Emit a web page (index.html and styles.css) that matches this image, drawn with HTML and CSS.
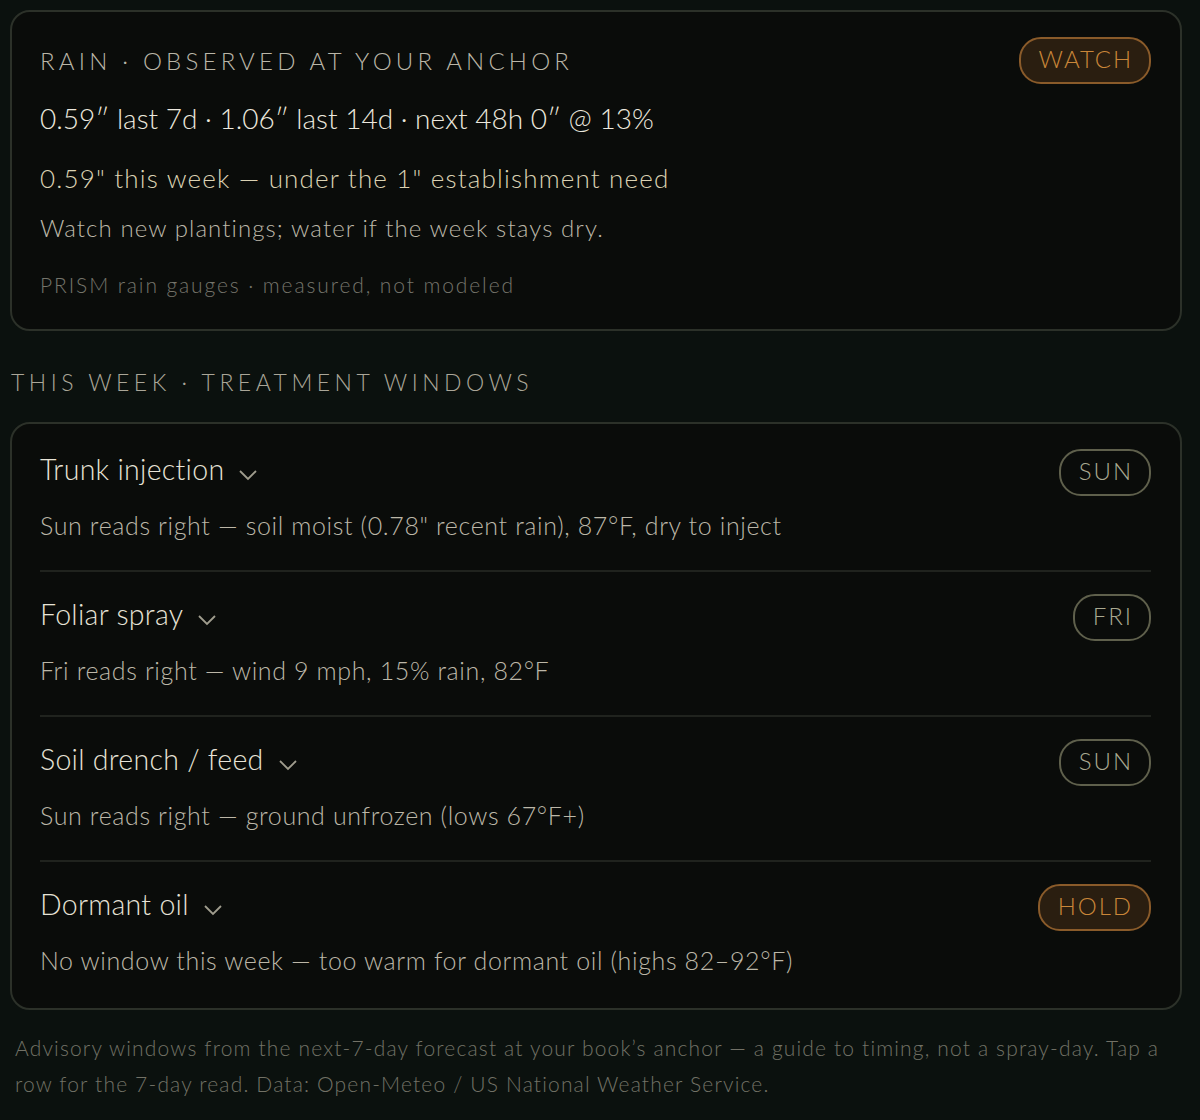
FILE: index.html
```html
<!DOCTYPE html>
<html>

<head>
  <meta charset="utf-8">
  <title>Rain and treatment windows</title>
  <link rel="stylesheet" href="styles.css">
</head>

<body>

  <div class="card rain">
    <div class="rain-head">
      <div class="label">Rain · Observed at your anchor</div>
      <span class="pill warn">WATCH</span>
    </div>
    <div class="stats">0.59″ last 7d · 1.06″ last 14d · next 48h 0″ @ 13%</div>
    <div class="verdict">0.59" this week — under the 1" establishment need</div>
    <div class="advice">Watch new plantings; water if the week stays dry.</div>
    <div class="source">PRISM rain gauges · measured, not modeled</div>
  </div>

  <h2 class="label section">This week · Treatment windows</h2>

  <div class="card windows" id="windows">
    <div class="row">
      <div class="row-head">
        <div class="title">Trunk injection <svg class="chev" viewBox="0 0 20 12"><path d="M2 2 L10 10 L18 2"/></svg></div>
        <span class="pill">SUN</span>
      </div>
      <div class="read">Sun reads right — soil moist (0.78" recent rain), 87°F, dry to inject</div>
    </div>
    <div class="row">
      <div class="row-head">
        <div class="title">Foliar spray <svg class="chev" viewBox="0 0 20 12"><path d="M2 2 L10 10 L18 2"/></svg></div>
        <span class="pill">FRI</span>
      </div>
      <div class="read">Fri reads right — wind 9 mph, 15% rain, 82°F</div>
    </div>
    <div class="row">
      <div class="row-head">
        <div class="title">Soil drench / feed <svg class="chev" viewBox="0 0 20 12"><path d="M2 2 L10 10 L18 2"/></svg></div>
        <span class="pill">SUN</span>
      </div>
      <div class="read">Sun reads right — ground unfrozen (lows 67°F+)</div>
    </div>
    <div class="row">
      <div class="row-head">
        <div class="title">Dormant oil <svg class="chev" viewBox="0 0 20 12"><path d="M2 2 L10 10 L18 2"/></svg></div>
        <span class="pill warn">HOLD</span>
      </div>
      <div class="read">No window this week — too warm for dormant oil (highs 82–92°F)</div>
    </div>
  </div>

  <p class="note">Advisory windows from the next-7-day forecast at your book’s anchor — a guide to timing, not a spray-day. Tap a
    row for the 7-day read. Data: Open-Meteo / US National Weather Service.</p>

</body>

</html>
```

FILE: styles.css
```css
body {
  margin: 0;
  padding: 10px 18px 0 10px;
  background-color: #0b110e;
  color: #e6e2d6;
  font-family: "Lato", "Open Sans", sans-serif;
  font-weight: 300;
}

.card {
  background: #0a0c0a;
  border: 2px solid #2c3129;
  border-radius: 20px;
}

.rain {
  padding: 25px 29px 30px 28px;
}

.rain-head {
  display: flex;
  justify-content: space-between;
  align-items: center;
}

.label {
  margin: 0;
  font-size: 24px;
  font-weight: 300;
  letter-spacing: 0.175em;
  text-transform: uppercase;
  color: #bab6a8;
}

.stats {
  margin-top: 16px;
  font-size: 28px;
  line-height: 36px;
  color: #ece8de;
}

.verdict {
  margin-top: 24px;
  font-size: 26px;
  line-height: 36px;
  letter-spacing: 0.045em;
  color: #dbd2b3;
}

.advice {
  margin-top: 15px;
  font-size: 24px;
  line-height: 34px;
  letter-spacing: 0.045em;
  color: #bcb7a8;
}

.source {
  margin-top: 26px;
  font-size: 21px;
  line-height: 28px;
  letter-spacing: 0.09em;
  color: #75746a;
}

/* status chips on the right of each row */
.pill {
  display: inline-block;
  flex: none;
  padding: 0 16px 0 18px;
  height: 43px;
  line-height: 40px;
  border: 2px solid #5f604c;
  border-radius: 22px;
  font-size: 24px;
  letter-spacing: 0.08em;
  color: #a9a991;
}

.pill.warn {
  background: #2a1e10;
  border-color: #8a5b2a;
  color: #c98639;
}

.section {
  margin: 37px 0 26px 1px;
  font-size: 23px;
  line-height: 28px;
  letter-spacing: 0.195em;
  color: #aaa698;
}

.windows {
  padding: 3px 29px 0 28px;
}

.row {
  padding: 22px 0 28px;
  border-bottom: 2px solid #20231e;
}

.row:last-child {
  border-bottom: none;
  padding-bottom: 31px;
}

.row-head {
  display: flex;
  justify-content: space-between;
  align-items: flex-start;
}

.title {
  font-size: 28.5px;
  line-height: 40px;
  letter-spacing: 0.01em;
  color: #e7e3d7;
}

.chev {
  width: 20px;
  height: 12px;
  margin-left: 6px;
  vertical-align: -1px;
  fill: none;
  stroke: #a09d8e;
  stroke-width: 1.8;
}

.read {
  margin-top: 12px;
  font-size: 25px;
  line-height: 34px;
  letter-spacing: 0.025em;
  color: #bcb7a8;
}

.note {
  margin: 20px 0 0 5px;
  font-size: 21px;
  line-height: 36px;
  letter-spacing: 0.055em;
  color: #727166;
}
```
